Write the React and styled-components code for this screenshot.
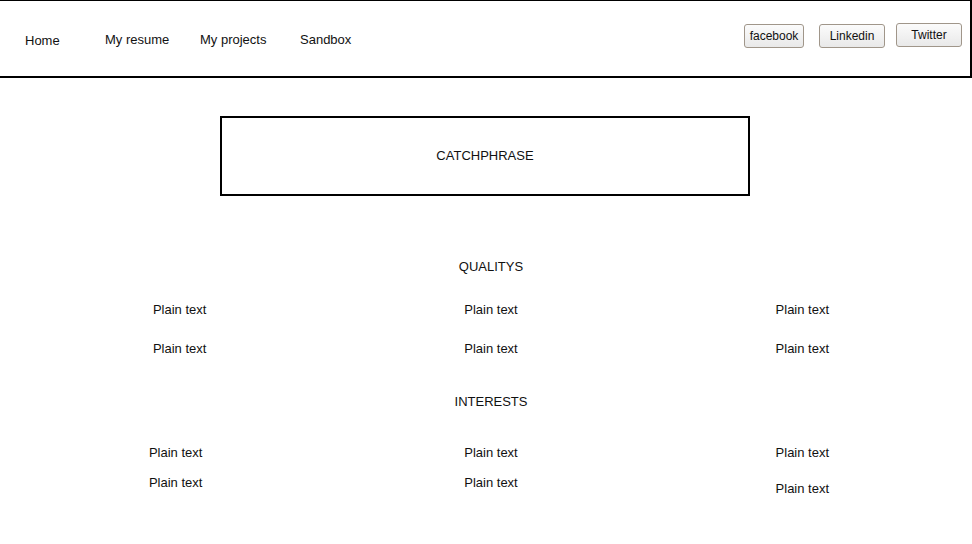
import React from 'react';
import styled, { createGlobalStyle } from 'styled-components';

const GlobalStyle = createGlobalStyle`
  html, body {
    margin: 0;
    padding: 0;
    background: #ffffff;
  }
  body {
    font-family: "Liberation Sans", Arial, sans-serif;
    font-size: 13px;
    color: #111111;
  }
`;

const Page = styled.div`
  width: 972px;
  min-height: 544px;
`;

const Header = styled.header`
  box-sizing: border-box;
  height: 78px;
  border-top: 1px solid #000;
  border-bottom: 2px solid #000;
  border-right: 2px solid #000;
  display: flex;
  align-items: center;
  padding: 0 8px 0 25px;
`;

const Nav = styled.nav`
  display: flex;
  align-items: center;
  flex: 1;
`;

const NavItem = styled.a`
  width: ${({ $w }) => $w}px;
  line-height: 15px;
  color: #111;
  text-decoration: none;
  margin-top: ${({ $dy }) => $dy || 0}px;
`;

const Social = styled.div`
  display: flex;
  align-items: center;
  margin-top: -8px;
`;

const SocialButton = styled.button`
  box-sizing: border-box;
  width: ${({ $w }) => $w}px;
  height: 24px;
  margin-left: ${({ $ml }) => $ml}px;
  margin-top: ${({ $dy }) => $dy || 0}px;
  padding: 0;
  border: 1px solid #a0968a;
  border-radius: 3px;
  background: linear-gradient(#fbfbfb, #e9e9e9);
  font-family: "Liberation Sans", Arial, sans-serif;
  font-size: 12px;
  color: #111;
`;

const Catchphrase = styled.div`
  box-sizing: border-box;
  width: 530px;
  height: 80px;
  margin: 38px 0 0 220px;
  padding-bottom: 2px;
  border: 2px solid #000;
  display: flex;
  align-items: center;
  justify-content: center;
  line-height: 15px;
`;

const Section = styled.section`
  padding: ${({ $pt }) => $pt}px 14px 0 24px;
`;

const SectionTitle = styled.div`
  text-align: center;
  line-height: 15px;
`;

const Grid = styled.div`
  display: grid;
  grid-template-columns: repeat(3, 1fr);
  row-gap: ${({ $gap }) => $gap}px;
  margin-top: ${({ $mt }) => $mt}px;
`;

const Cell = styled.div`
  text-align: center;
  line-height: 15px;
  margin-left: ${({ $dx }) => ($dx || 0) * 2}px;
  margin-top: ${({ $dy }) => $dy || 0}px;
`;

const qualities = [
  {}, {}, {},
  {}, {}, {},
];

const interests = [
  { dx: -4 }, {}, {},
  { dx: -4 }, {}, { dy: 6 },
];

export default function App() {
  return (
    <Page>
      <GlobalStyle />
      <Header>
        <Nav>
          <NavItem $w={80} $dy={3}>Home</NavItem>
          <NavItem $w={95} $dy={1}>My resume</NavItem>
          <NavItem $w={100} $dy={1}>My projects</NavItem>
          <NavItem $w={80} $dy={1}>Sandbox</NavItem>
        </Nav>
        <Social>
          <SocialButton $w={60} $ml={0} $dy={2}>facebook</SocialButton>
          <SocialButton $w={66} $ml={15} $dy={2}>Linkedin</SocialButton>
          <SocialButton $w={66} $ml={11}>Twitter</SocialButton>
        </Social>
      </Header>

      <Catchphrase>CATCHPHRASE</Catchphrase>

      <Section $pt={63}>
        <SectionTitle>QUALITYS</SectionTitle>
        <Grid $gap={24} $mt={28}>
          {qualities.map((c, i) => (
            <Cell key={i} $dx={c.dx} $dy={c.dy}>Plain text</Cell>
          ))}
        </Grid>
      </Section>

      <Section $pt={38}>
        <SectionTitle>INTERESTS</SectionTitle>
        <Grid $gap={15} $mt={36}>
          {interests.map((c, i) => (
            <Cell key={i} $dx={c.dx} $dy={c.dy}>Plain text</Cell>
          ))}
        </Grid>
      </Section>
    </Page>
  );
}
